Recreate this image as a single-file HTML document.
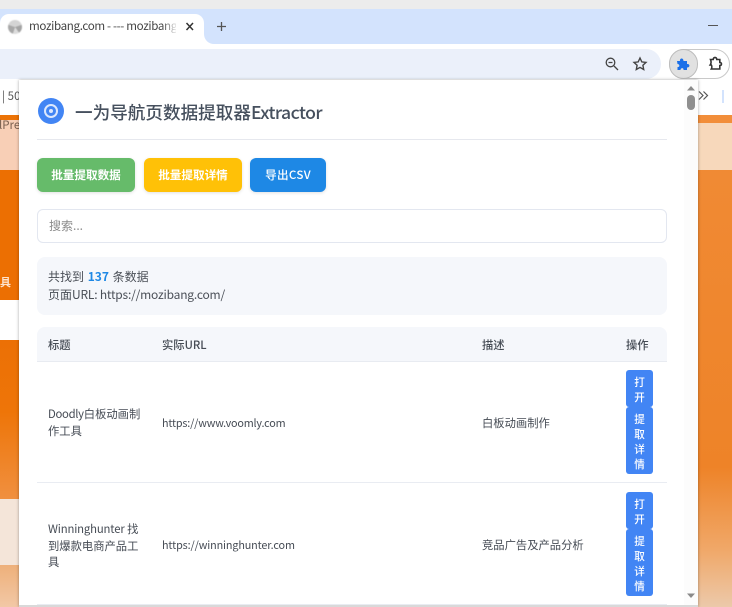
<!DOCTYPE html>
<html><head><meta charset="utf-8">
<style>
*{box-sizing:border-box}
html,body{margin:0;padding:0;width:732px;height:607px;overflow:hidden;background:#fff;font-family:"Noto Sans CJK SC","Liberation Sans",sans-serif}
.a{position:absolute}
.t{position:absolute;white-space:nowrap;font-family:"Noto Sans CJK SC","Liberation Sans",sans-serif;color:#4a5568;line-height:1}
.btn{position:absolute;top:158px;height:34px;border-radius:6px;color:#fff;font-family:"Noto Sans CJK SC",sans-serif;font-weight:700;font-size:11.6px;line-height:34px;text-align:center;box-shadow:0 1px 3px rgba(0,0,0,.12);white-space:nowrap}
.op{position:absolute;left:626px;width:27px;background:#4285f4;border-radius:3px;color:#fff;font-family:"Noto Sans CJK SC",sans-serif;font-size:10.6px;font-weight:500;line-height:15px;text-align:center;padding-top:5px}
.h{font-size:11.3px;font-weight:500;color:#454b54;top:340px}
.c{font-size:11.3px;color:#454b54}
</style></head><body>
<!-- chrome -->
<div class="a" style="left:0;top:0;width:732px;height:9px;background:#ececec"></div>
<div class="a" style="left:0;top:9px;width:732px;height:35px;background:#d3e3fd"></div>
<div class="a" style="left:0;top:14px;width:204px;height:36px;background:#fff;border-radius:9px 9px 0 0"></div>
<div class="a" style="left:204px;top:34px;width:10px;height:10px;background:#fff"></div>
<div class="a" style="left:204px;top:24px;width:20px;height:20px;background:#d3e3fd;border-radius:0 0 0 10px"></div>
<div class="a" style="left:8px;top:20px;width:14px;height:14px;border-radius:50%;filter:blur(.5px);background:conic-gradient(#d4d4d4 0 20%,#a4a4a4 20% 40%,#dcdcdc 40% 55%,#a8a8a8 55% 80%,#d4d4d4 80%)"></div>
<div class="t" style="left:29px;top:21px;font-size:11.6px;color:#444;width:147px;overflow:hidden;letter-spacing:-.35px">mozibang.com - --- mozibang</div>
<div class="a" style="left:162px;top:14px;width:16px;height:28px;background:linear-gradient(90deg,rgba(255,255,255,0),#fff)"></div>
<svg class="a" style="left:185px;top:21px" width="10" height="11"><path d="M1.5 2l6.5 7M8 2L1.500 9" stroke="#333" stroke-width="1.500" fill="none"/></svg>
<svg class="a" style="left:216px;top:21px" width="11" height="11"><path d="M5.500 1v9M1 5.500h9" stroke="#555" stroke-width="1.300" fill="none"/></svg>
<div class="a" style="left:708px;top:25px;width:10px;height:1.300px;background:#555"></div>
<!-- toolbar -->
<div class="a" style="left:0;top:49px;width:661px;height:30px;background:#ebf0fa;border-radius:0 15px 15px 0"></div>
<svg class="a" style="left:604px;top:56px" width="16" height="16" fill="none" stroke="#444" stroke-width="1.300"><circle cx="6.500" cy="6.500" r="4.300"/><path d="M4.500 6.500h4M10 10l4 4"/></svg>
<svg class="a" style="left:632px;top:56px" width="16" height="16" fill="none" stroke="#444" stroke-width="1.400"><path d="M8 2l1.800 3.900 4.200.5-3.100 2.900.8 4.200L8 11.400l-3.700 2.100.8-4.200L2 6.400l4.200-.5z"/></svg>
<div class="a" style="left:669px;top:49px;width:61px;height:30px;border:1px solid #c9c9c9;border-radius:15px;background:#fff"></div>
<div class="a" style="left:669px;top:49px;width:29px;height:30px;border:1px solid #bdbdbd;border-radius:15px;background:#e1e1e1"></div>
<svg class="a" style="left:676px;top:57px" width="15" height="14" viewBox="0 0 15 14"><path d="M1 4h3c-.500-3 3.500-3.500 3.500 0h3.500v3c3-.5 3.500 3.500 0 3.500V13H7.500c.5-2.500-3-2.500-3 0H1.500V10c2.500.5 2.500-3 0-3z" fill="#1a6fe8"/></svg>
<svg class="a" style="left:708px;top:56px" width="15" height="15" viewBox="0 0 15 15" fill="none" stroke="#333" stroke-width="1.600"><path d="M2.500 3.500h2.700c0-2.800 3.600-2.800 3.600 0h3v3c2.200 0 2.200 3 0 3v3.500H3.300c.7-1.200.7-3 0-4H2.200c1-1.500 1-3.800.3-5.500z"/></svg>
<!-- page behind -->
<div class="a" style="left:0;top:79px;width:732px;height:36px;background:#fff"></div>
<div class="t" style="left:2px;top:91px;font-size:11.500px;color:#555">| 50</div>
<div class="a" style="left:0;top:115px;width:19px;height:5px;background:#ec7306"></div>
<div class="a" style="left:0;top:120px;width:19px;height:50px;background:#f8cfb6"></div>
<div class="t" style="left:-1px;top:120px;font-size:11.500px;color:#7a6050">lPre</div>
<div class="a" style="left:0;top:170px;width:19px;height:130px;background:#ec6f02"></div>
<div class="t" style="left:0;top:277px;font-size:11px;color:#fde3cc;font-weight:700;width:19px;overflow:hidden">具</div>
<div class="a" style="left:0;top:300px;width:19px;height:40px;background:#fff"></div>
<div class="a" style="left:0;top:340px;width:19px;height:160px;background:linear-gradient(#ec7005 0,#ee7508 45%,#f09040 100%)"></div>
<div class="a" style="left:0;top:499px;width:19px;height:66px;background:#f4e5d9"></div>
<div class="a" style="left:0;top:565px;width:19px;height:42px;background:linear-gradient(#eeb07a,#f2c8a6)"></div>
<div class="a" style="left:698px;top:115px;width:34px;height:8px;background:#f28e3a"></div>
<div class="a" style="left:698px;top:123px;width:34px;height:47px;background:#f7d8bb"></div>
<div class="a" style="left:698px;top:170px;width:34px;height:437px;background:linear-gradient(#f08a34 0,#ee8328 68%,#f0a869 87%,#ecc9aa 100%)"></div>
<svg class="a" style="left:698px;top:90px" width="11" height="12" fill="none" stroke="#555" stroke-width="1.200"><path d="M1 1.500l4 4-4 4M5.500 1.500l4 4-4 4"/></svg>
<div class="a" style="left:722px;top:90px;width:2px;height:13px;background:#d3e3fd"></div>
<!-- popup -->
<div class="a" style="left:19px;top:80px;width:679px;height:527px;background:#fff;box-shadow:0 0 3px rgba(0,0,0,.35)"></div>
<div class="a" style="left:684px;top:80px;width:14px;height:527px;background:#fcfcfc"></div>
<svg class="a" style="left:686px;top:85px" width="10" height="6"><path d="M1 5.500L5 1l4 4.500z" fill="#8a8a8a"/></svg>
<div class="a" style="left:687px;top:95px;width:8px;height:15px;border-radius:4px;background:#8f8f8f"></div>
<svg class="a" style="left:686px;top:593px" width="10" height="6"><path d="M1 .5L5 5l4-4.500z" fill="#8a8a8a"/></svg>
<!-- header -->
<div class="a" style="left:38px;top:98px;width:26px;height:26px;border-radius:50%;background:#4285f4"></div>
<div class="a" style="left:44px;top:104px;width:14px;height:14px;border-radius:50%;border:2px solid #dce8fd"></div>
<div class="a" style="left:49px;top:109px;width:4px;height:4px;border-radius:50%;background:#dce8fd"></div>
<div class="t" style="left:75px;top:104px;font-size:17.600px;font-weight:500;color:#46505e;line-height:18px">一为导航页数据提取器<span style="letter-spacing:-.55px">Extractor</span></div>
<div class="a" style="left:37px;top:139px;width:630px;height:1px;background:#e6e8ee"></div>
<!-- buttons -->
<div class="btn" style="left:37px;width:98px;background:#66bb6a">批量提取数据</div>
<div class="btn" style="left:144px;width:98px;background:#ffc107">批量提取详情</div>
<div class="btn" style="left:250px;width:76px;background:#1e88e5;font-weight:500;letter-spacing:.3px">导出CSV</div>
<!-- search -->
<div class="a" style="left:37px;top:209px;width:630px;height:34px;border:1px solid #e3e7f0;border-radius:6px;background:#fff"></div>
<div class="t" style="left:49px;top:220px;font-size:12px;color:#8a8a8a">搜索...</div>
<!-- info -->
<div class="a" style="left:37px;top:257px;width:630px;height:58px;background:#f5f7fb;border-radius:8px"></div>
<div class="t" style="left:48px;top:271px;font-size:12px;color:#4a4f57;word-spacing:1px">共找到 <b style="color:#1e88e5">137</b> 条数据</div>
<div class="t" style="left:48px;top:289px;font-size:12px;color:#4a4f57">页面<span style="letter-spacing:-.2px">URL: https://mozibang.com/</span></div>
<!-- table -->
<div class="a" style="left:37px;top:327px;width:630px;height:35px;background:#f5f7fb;border-radius:8px 8px 0 0;border-bottom:1px solid #e8ebf1"></div>
<div class="t h" style="left:48px">标题</div>
<div class="t h" style="left:162px">实际URL</div>
<div class="t h" style="left:482px">描述</div>
<div class="t h" style="left:626px">操作</div>
<div class="t c" style="left:48px;top:406px;line-height:17px"><span style="letter-spacing:-.3px">Doodly</span>白板动画制<br>作工具</div>
<div class="t c" style="left:162px;top:418px;font-size:10.8px;letter-spacing:-.18px">https://www.voomly.com</div>
<div class="t c" style="left:482px;top:418px">白板动画制作</div>
<div class="op" style="top:370px;height:37px">打<br>开</div>
<div class="op" style="top:407px;height:67px">提<br>取<br>详<br>情</div>
<div class="a" style="left:37px;top:482px;width:630px;height:1px;background:#e9ecf2"></div>
<div class="t c" style="left:48px;top:521px;line-height:16.600px"><span style="letter-spacing:-.15px">Winninghunter</span> 找<br>到爆款电商产品工<br>具</div>
<div class="t c" style="left:162px;top:540px;font-size:10.8px;letter-spacing:-.12px">https://winninghunter.com</div>
<div class="t c" style="left:482px;top:540px">竞品广告及产品分析</div>
<div class="op" style="top:492px;height:37px">打<br>开</div>
<div class="op" style="top:529px;height:67px">提<br>取<br>详<br>情</div>
<div class="a" style="left:37px;top:604px;width:630px;height:1px;background:#e9ecf2"></div>
<div class="a" style="left:19px;top:605px;width:679px;height:2px;background:#d9d9d9"></div>
</body></html>
